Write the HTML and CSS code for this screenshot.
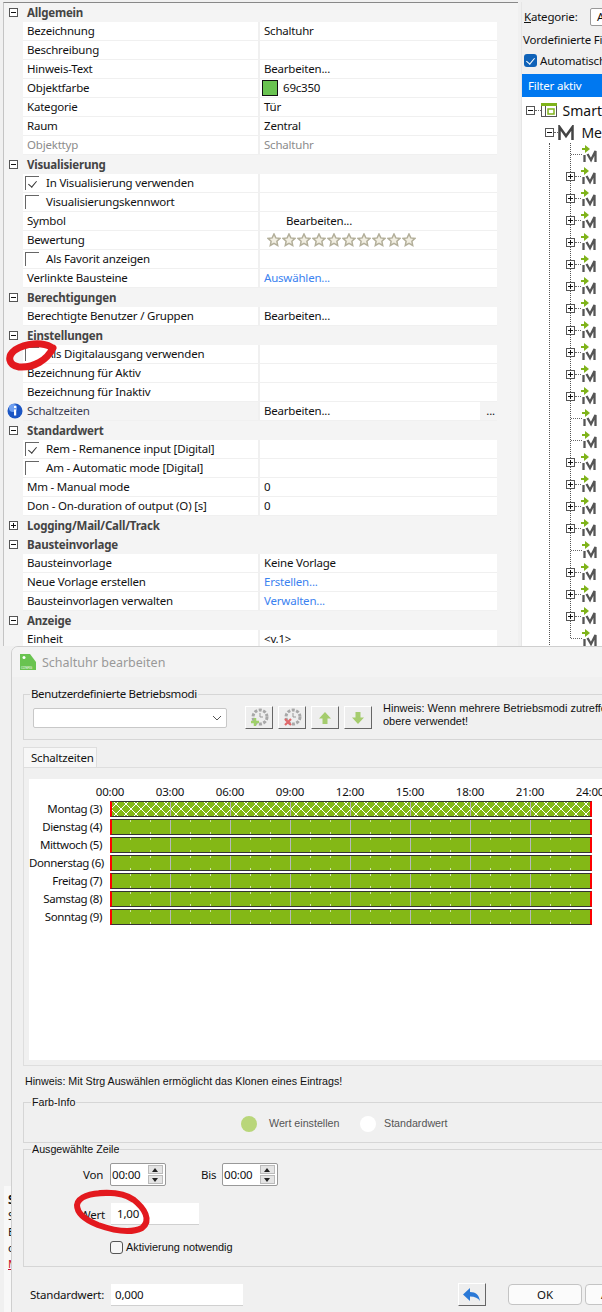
FILE: index.html
```html
<!DOCTYPE html>
<html lang="de">
<head>
    <meta charset="UTF-8">
    <title>Schaltuhr bearbeiten</title>
    <link rel="stylesheet" href="styles.css">
</head>
<body>
    <svg class="defs" width="0" height="0">
        <symbol id="star" viewBox="0 0 14 14">
            <path d="M7 1l1.800 3.900 4.200.5-3.100 2.900.8 4.200L7 10.400l-3.700 2.100.8-4.200L1 5.400l4.200-.5z" fill="#f1eee2" stroke="#b3af9a" stroke-width="1.500"/>
        </symbol>
        <symbol id="leaf" viewBox="0 0 16 18">
            <path d="M0 3h3V0l5 4-5 4V5H0z" fill="#7fb31a"/>
            <path d="M2.500 10v7M5.500 9l3.500 6 4.500-9v11" fill="none" stroke="#555" stroke-width="2.300"/>
        </symbol>
    </svg>

    <div class="desk">
        <div class="props">
            <div class="group"><i class="toggle"></i>Allgemein</div>
            <div class="row"><div class="name">Bezeichnung</div><div class="val">Schaltuhr</div></div>
            <div class="row"><div class="name">Beschreibung</div><div class="val"></div></div>
            <div class="row"><div class="name">Hinweis-Text</div><div class="val">Bearbeiten...</div></div>
            <div class="row"><div class="name">Objektfarbe</div><div class="val val-color"><i class="swatch"></i>69c350</div></div>
            <div class="row"><div class="name">Kategorie</div><div class="val">Tür</div></div>
            <div class="row"><div class="name">Raum</div><div class="val">Zentral</div></div>
            <div class="row muted"><div class="name">Objekttyp</div><div class="val">Schaltuhr</div></div>

            <div class="group"><i class="toggle"></i>Visualisierung</div>
            <div class="row"><div class="name name-chk"><i class="chk on"></i>In Visualisierung verwenden</div><div class="val"></div></div>
            <div class="row"><div class="name name-chk"><i class="chk"></i>Visualisierungskennwort</div><div class="val"></div></div>
            <div class="row"><div class="name">Symbol</div><div class="val val-symbol">Bearbeiten...</div></div>
            <div class="row"><div class="name">Bewertung</div><div class="val val-stars">
                <svg><use href="#star"/></svg><svg><use href="#star"/></svg><svg><use href="#star"/></svg><svg><use href="#star"/></svg><svg><use href="#star"/></svg><svg><use href="#star"/></svg><svg><use href="#star"/></svg><svg><use href="#star"/></svg><svg><use href="#star"/></svg><svg><use href="#star"/></svg>
            </div></div>
            <div class="row"><div class="name name-chk"><i class="chk"></i>Als Favorit anzeigen</div><div class="val"></div></div>
            <div class="row"><div class="name">Verlinkte Bausteine</div><div class="val link">Auswählen...</div></div>

            <div class="group"><i class="toggle"></i>Berechtigungen</div>
            <div class="row"><div class="name">Berechtigte Benutzer / Gruppen</div><div class="val">Bearbeiten...</div></div>

            <div class="group"><i class="toggle"></i>Einstellungen</div>
            <div class="row"><div class="name name-chk"><i class="chk"></i>Als Digitalausgang verwenden</div><div class="val"></div></div>
            <div class="row"><div class="name">Bezeichnung für Aktiv</div><div class="val"></div></div>
            <div class="row"><div class="name">Bezeichnung für Inaktiv</div><div class="val"></div></div>
            <div class="row row-info">
                <svg class="info" width="16" height="16" viewBox="0 0 16 16">
                    <circle cx="8" cy="8" r="7.500" fill="#1c56c4"/>
                    <circle cx="6" cy="5" r="4" fill="#6f9ff0"/>
                    <rect x="7" y="6.500" width="2.200" height="6" fill="#fff"/>
                    <rect x="7" y="3" width="2.200" height="2" fill="#fff"/>
                </svg>
                <div class="name">Schaltzeiten</div><div class="val val-more">Bearbeiten...<span class="more">...</span></div>
            </div>

            <div class="group"><i class="toggle"></i>Standardwert</div>
            <div class="row"><div class="name name-chk"><i class="chk on"></i>Rem - Remanence input [Digital]</div><div class="val"></div></div>
            <div class="row"><div class="name name-chk"><i class="chk"></i>Am - Automatic mode [Digital]</div><div class="val"></div></div>
            <div class="row"><div class="name">Mm - Manual mode</div><div class="val">0</div></div>
            <div class="row"><div class="name">Don - On-duration of output (O) [s]</div><div class="val">0</div></div>

            <div class="group"><i class="toggle plus"></i>Logging/Mail/Call/Track</div>

            <div class="group"><i class="toggle"></i>Bausteinvorlage</div>
            <div class="row"><div class="name">Bausteinvorlage</div><div class="val">Keine Vorlage</div></div>
            <div class="row"><div class="name">Neue Vorlage erstellen</div><div class="val link">Erstellen...</div></div>
            <div class="row"><div class="name">Bausteinvorlagen verwalten</div><div class="val link">Verwalten...</div></div>

            <div class="group"><i class="toggle"></i>Anzeige</div>
            <div class="row"><div class="name">Einheit</div><div class="val">&lt;v.1&gt;</div></div>
        </div>

        <div class="side">
            <div class="side-cat"><span class="cat-label"><u>K</u>ategorie:</span><span class="cat-select">A</span></div>
            <div class="side-line">Vordefinierte Filter</div>
            <div class="side-auto"><i class="blue-chk"></i>Automatisch</div>
            <div class="filter-bar">Filter aktiv</div>
            <div class="tree">
                <div class="tree-row tree-smart">
                    <i class="toggle"></i><span class="dots"></span>
                    <svg class="smart-icon" width="16" height="14" viewBox="0 0 16 14">
                        <rect x=".5" y=".5" width="15" height="13" fill="#fff" stroke="#555"/>
                        <rect x="0" y="0" width="16" height="3" fill="#7fb31a"/>
                        <path d="M4.500 3v11" stroke="#555"/>
                        <rect x="7" y="6" width="6" height="5" fill="none" stroke="#7fb31a" stroke-width="1.500"/>
                    </svg>
                    <span class="tree-label">Smart</span>
                </div>
                <div class="tree-row tree-me">
                    <i class="toggle"></i><span class="dots"></span>
                    <svg class="m-icon" width="16" height="15" viewBox="0 0 16 15"><path d="M1.500 15V2l6.500 9 6.500-9v13" fill="none" stroke="#444" stroke-width="2.500"/></svg>
                    <span class="tree-label">Me</span>
                </div>
                <div class="trunk">
                    <div class="leaves">
                        <div class="tree-row"><span class="dots dots-long"></span><svg class="leaf"><use href="#leaf"/></svg></div>
                        <div class="tree-row"><i class="toggle plus"></i><span class="dots"></span><svg class="leaf"><use href="#leaf"/></svg></div>
                        <div class="tree-row"><i class="toggle plus"></i><span class="dots"></span><svg class="leaf"><use href="#leaf"/></svg></div>
                        <div class="tree-row"><i class="toggle plus"></i><span class="dots"></span><svg class="leaf"><use href="#leaf"/></svg></div>
                        <div class="tree-row"><i class="toggle plus"></i><span class="dots"></span><svg class="leaf"><use href="#leaf"/></svg></div>
                        <div class="tree-row"><i class="toggle plus"></i><span class="dots"></span><svg class="leaf"><use href="#leaf"/></svg></div>
                        <div class="tree-row"><i class="toggle plus"></i><span class="dots"></span><svg class="leaf"><use href="#leaf"/></svg></div>
                        <div class="tree-row"><i class="toggle plus"></i><span class="dots"></span><svg class="leaf"><use href="#leaf"/></svg></div>
                        <div class="tree-row"><i class="toggle plus"></i><span class="dots"></span><svg class="leaf"><use href="#leaf"/></svg></div>
                        <div class="tree-row"><i class="toggle plus"></i><span class="dots"></span><svg class="leaf"><use href="#leaf"/></svg></div>
                        <div class="tree-row"><i class="toggle plus"></i><span class="dots"></span><svg class="leaf"><use href="#leaf"/></svg></div>
                        <div class="tree-row"><i class="toggle plus"></i><span class="dots"></span><svg class="leaf"><use href="#leaf"/></svg></div>
                        <div class="tree-row"><span class="dots dots-long"></span><svg class="leaf"><use href="#leaf"/></svg></div>
                        <div class="tree-row"><span class="dots dots-long"></span><svg class="leaf"><use href="#leaf"/></svg></div>
                        <div class="tree-row"><i class="toggle plus"></i><span class="dots"></span><svg class="leaf"><use href="#leaf"/></svg></div>
                        <div class="tree-row"><i class="toggle plus"></i><span class="dots"></span><svg class="leaf"><use href="#leaf"/></svg></div>
                        <div class="tree-row"><i class="toggle plus"></i><span class="dots"></span><svg class="leaf"><use href="#leaf"/></svg></div>
                        <div class="tree-row"><i class="toggle plus"></i><span class="dots"></span><svg class="leaf"><use href="#leaf"/></svg></div>
                        <div class="tree-row"><span class="dots dots-long"></span><svg class="leaf"><use href="#leaf"/></svg></div>
                        <div class="tree-row"><i class="toggle plus"></i><span class="dots"></span><svg class="leaf"><use href="#leaf"/></svg></div>
                        <div class="tree-row"><i class="toggle plus"></i><span class="dots"></span><svg class="leaf"><use href="#leaf"/></svg></div>
                        <div class="tree-row"><i class="toggle plus"></i><span class="dots"></span><svg class="leaf"><use href="#leaf"/></svg></div>
                        <div class="tree-row"><span class="dots dots-long"></span><svg class="leaf"><use href="#leaf"/></svg></div>
                    </div>
                </div>
            </div>
        </div>
    </div>

    <div class="behind">
        <div class="behind-b">S</div>
        <div>S</div>
        <div>E</div>
        <div>c</div>
        <div class="behind-red">M</div>
    </div>

    <!-- dialog window sits over the property grid -->
    <div class="dialog">
        <div class="titlebar">
            <svg class="app-icon" width="16" height="16" viewBox="0 0 16 16">
                <path d="M0 0h10l6 8v8H0z" fill="#69c350"/>
                <circle cx="4" cy="3.500" r="1.500" fill="#fff"/>
                <text x="1" y="14.500" class="app-icon-text">CONFIG</text>
            </svg>
            <span>Schaltuhr bearbeiten</span>
        </div>
        <div class="dialog-body">
            <fieldset class="box box-modes">
                <legend>Benutzerdefinierte Betriebsmodi</legend>
                <div class="modes">
                    <div class="combo">
                        <svg width="10" height="6" viewBox="0 0 10 6"><path d="M1 1l4 4 4-4" fill="none" stroke="#555"/></svg>
                    </div>
                    <div class="tool-btns">
                        <button class="tool">
                            <svg width="20" height="20" viewBox="0 0 20 20">
                                <circle cx="11" cy="9" r="7" fill="none" stroke="#a8a8a8" stroke-width="3" stroke-dasharray="3 1.500"/>
                                <path d="M11 5v4h3" fill="none" stroke="#999"/>
                                <path d="M6 10v8M2 14h8" stroke="#9fd06a" stroke-width="2.500"/>
                            </svg>
                        </button>
                        <button class="tool">
                            <svg width="20" height="20" viewBox="0 0 20 20">
                                <circle cx="11" cy="9" r="7" fill="none" stroke="#a8a8a8" stroke-width="3" stroke-dasharray="3 1.500"/>
                                <path d="M11 5v4h3" fill="none" stroke="#999"/>
                                <path d="M3 11l6 6M9 11l-6 6" stroke="#e0686a" stroke-width="2.200"/>
                            </svg>
                        </button>
                        <button class="tool">
                            <svg width="14" height="14" viewBox="0 0 14 14"><path d="M7 1l6 6.500H9.500V13h-5V7.500H1z" fill="#a5cc6e"/></svg>
                        </button>
                        <button class="tool">
                            <svg width="14" height="14" viewBox="0 0 14 14"><path d="M7 13L1 6.500h3.500V1h5v5.500H13z" fill="#a5cc6e"/></svg>
                        </button>
                    </div>
                    <p class="modes-hint">Hinweis: Wenn mehrere Betriebsmodi zutreffen, wird der<br>obere verwendet!</p>
                </div>
            </fieldset>

            <div class="tabs"><div class="tab">Schaltzeiten</div></div>
            <div class="tab-pane">
                <div class="schedule">
                    <div class="hours">
                        <span>00:00</span><span>03:00</span><span>06:00</span><span>09:00</span><span>12:00</span><span>15:00</span><span>18:00</span><span>21:00</span><span>24:00</span>
                    </div>
                    <div class="day"><span class="day-name">Montag (3)</span><div class="bar bar-hatch"></div></div>
                    <div class="day"><span class="day-name">Dienstag (4)</span><div class="bar"></div></div>
                    <div class="day"><span class="day-name">Mittwoch (5)</span><div class="bar"></div></div>
                    <div class="day"><span class="day-name">Donnerstag (6)</span><div class="bar"></div></div>
                    <div class="day"><span class="day-name">Freitag (7)</span><div class="bar"></div></div>
                    <div class="day"><span class="day-name">Samstag (8)</span><div class="bar"></div></div>
                    <div class="day"><span class="day-name">Sonntag (9)</span><div class="bar"></div></div>
                </div>
            </div>

            <p class="clone-hint">Hinweis: Mit Strg Auswählen ermöglicht das Klonen eines Eintrags!</p>

            <fieldset class="box box-colors">
                <legend class="legend-sm">Farb-Info</legend>
                <div class="colors">
                    <i class="dot dot-green"></i><span class="dot-label dot-label-first">Wert einstellen</span>
                    <i class="dot dot-white"></i><span class="dot-label">Standardwert</span>
                </div>
            </fieldset>

            <fieldset class="box box-line">
                <legend class="legend-sm">Ausgewählte Zeile</legend>
                <div class="line-times">
                    <span class="lbl lbl-von">Von</span>
                    <div class="spin"><span>00:00</span><div class="spin-btns"><i class="up"></i><i class="down"></i></div></div>
                    <span class="lbl lbl-bis">Bis</span>
                    <div class="spin"><span>00:00</span><div class="spin-btns"><i class="up"></i><i class="down"></i></div></div>
                </div>
                <div class="line-value">
                    <span class="lbl">Wert</span>
                    <div class="input input-wert">1,00</div>
                </div>
                <label class="line-check"><i class="round-chk"></i>Aktivierung notwendig</label>
            </fieldset>

            <div class="footer">
                <span class="footer-lbl">Standardwert:</span>
                <div class="input input-std">0,000</div>
                <button class="tool tool-back">
                    <svg width="18" height="14" viewBox="0 0 18 14"><path d="M0 6.500L7 0v4c6 0 9 3 10 9-2-3-5-4.500-10-4.500V13z" fill="#2a78d6"/></svg>
                </button>
                <button class="push push-ok">OK</button>
                <button class="push push-cancel">Abbrechen</button>
            </div>
        </div>
    </div>

    <!-- hand drawn red marks on the screenshot -->
    <svg class="mark mark-check" width="60" height="40" viewBox="0 0 60 40">
        <path d="M47 7C38 2 22 3 11 10 3 16 4 25 15 27 30 28 43 20 49 8" fill="none" stroke="#e3191e" stroke-width="7" stroke-linecap="round"/>
    </svg>
    <svg class="mark mark-wert" width="90" height="55" viewBox="0 0 90 55">
        <path d="M28 5C42 4 54 6 62 12 72 20 80 32 70 40 58 46 40 42 26 37 16 33 5 26 5 17 6 9 18 5 34 5" fill="none" stroke="#e3191e" stroke-width="6" stroke-linecap="round"/>
    </svg>
</body>
</html>
```
FILE: styles.css
```css
* {
    box-sizing: border-box;
}

html, body {
    margin: 0;
    height: 1312px;
    overflow: hidden;
}

body {
    position: relative;
    width: 602px;
    background: #f0f0f0;
    color: #111;
    font-family: "Noto Sans", "Open Sans", sans-serif;
    font-size: 11.500px;
    letter-spacing: -0.2px;
    line-height: 19px;
}

.defs {
    position: absolute;
}

i {
    display: block;
    flex: none;
}

/* Property grid */
.desk {
    display: flex;
    height: 646px;
    padding-top: 2px;
}

.props {
    width: 515px;
    flex: none;
    margin-left: 3px;
    padding-right: 21px;
    border-top: 1px solid #888;
    border-left: 1px solid #c4c4c4;
    background: #f4f4f4;
}

.group {
    display: flex;
    align-items: center;
    height: 19px;
    padding-left: 5px;
    font-weight: 700;
    color: #444;
}

.toggle {
    position: relative;
    width: 9px;
    height: 9px;
    margin-right: 9px;
    border: 1px solid #555;
    background: #fff;
}

.toggle::before {
    content: "";
    position: absolute;
    left: 1px;
    top: 3px;
    width: 5px;
    height: 1px;
    background: #111;
}

.toggle.plus::after {
    content: "";
    position: absolute;
    left: 3px;
    top: 1px;
    width: 1px;
    height: 5px;
    background: #111;
}

.row {
    position: relative;
    display: flex;
    height: 19px;
    margin-left: 19px;
    background: #fff;
    border-bottom: 1px solid #f0f0f0;
}

.name {
    display: flex;
    align-items: center;
    width: 237px;
    flex: none;
    padding: 0 0 1px 4px;
    border-right: 2px solid #f0f0f0;
}

.name-chk {
    padding-left: 2px;
}

.val {
    display: flex;
    align-items: center;
    flex: 1;
    padding: 0 0 1px 4px;
}

.muted {
    color: #8c8c8c;
}

.link {
    color: #3b82f0;
}

.val-color {
    padding-left: 2px;
}

.swatch {
    width: 16px;
    height: 16px;
    margin-right: 5px;
    background: #69c350;
    border: 1px solid #111;
}

.val-symbol {
    padding-left: 26px;
}

.val-stars {
    gap: 1px;
    padding-left: 7px;
}

.val-stars svg {
    width: 14px;
    height: 14px;
}

.chk {
    position: relative;
    width: 14px;
    height: 14px;
    margin-right: 7px;
    border-top: 1px solid #666;
    border-left: 1px solid #666;
}

.chk.on::after {
    content: "";
    position: absolute;
    left: 4px;
    top: 2px;
    width: 4px;
    height: 7px;
    border-right: 1px solid #333;
    border-bottom: 1px solid #333;
    transform: rotate(40deg);
}

.row-info {
    background: #f4f4f4;
}

.row-info .name {
    color: #3c3c50;
}

.row-info .val {
    background: #fff;
}

.val-more {
    justify-content: space-between;
}

.more {
    padding: 0 2px 0 6px;
    background: #f4f4f4;
    line-height: 18px;
}

.info {
    position: absolute;
    left: -16px;
    top: 1px;
}

/* Object tree on the right */
.side {
    flex: 1;
    margin-left: 3px;
    min-width: 0;
    border-left: 1px solid #e6e6e6;
    overflow: hidden;
    white-space: nowrap;
}

.side-cat {
    display: flex;
    align-items: center;
    height: 27px;
    padding: 2px 0 0 2px;
}

.cat-label {
    width: 66px;
    flex: none;
}

.cat-select {
    width: 40px;
    height: 18px;
    padding-left: 6px;
    border: 1px solid #999;
    border-radius: 2px;
    background: #fff;
    line-height: 16px;
}

.side-line {
    height: 24px;
    padding-left: 1px;
    line-height: 22px;
}

.side-auto {
    display: flex;
    align-items: center;
    height: 21px;
    padding: 0 0 6px 2px;
}

.blue-chk {
    position: relative;
    width: 13px;
    height: 13px;
    margin-right: 3px;
    border-radius: 3px;
    background: #0f62b8;
}

.blue-chk::after {
    content: "";
    position: absolute;
    left: 4px;
    top: 2px;
    width: 4px;
    height: 7px;
    border-right: 1px solid #fff;
    border-bottom: 1px solid #fff;
    transform: rotate(40deg);
}

.filter-bar {
    height: 23px;
    padding-left: 6px;
    background: #0078f0;
    color: #fff;
    line-height: 23px;
}

.tree {
    height: 560px;
    padding-top: 2px;
    background: #fff;
}

.tree-row {
    display: flex;
    align-items: center;
    height: 22px;
}

.tree .toggle {
    margin-right: 0;
    background: #fff;
}

.tree-label {
    font-size: 14px;
    letter-spacing: 0;
}

.tree-smart {
    padding-left: 4px;
}

.tree-me {
    padding-left: 23px;
}

.dots {
    width: 6px;
    border-top: 1px dotted #666;
}

.dots-long {
    width: 11px;
}

.tree-smart .dots,
.tree-me .dots {
    width: 7px;
}

.smart-icon {
    flex: none;
    margin-right: 6px;
}

.m-icon {
    flex: none;
    margin-right: 7px;
}

.trunk {
    height: 520px;
    margin-left: 27px;
    padding-left: 20px;
    border-left: 1px dotted #555;
}

.leaves {
    height: 495px;
    border-left: 1px dotted #555;
}

.leaves .toggle {
    margin-left: -5px;
    z-index: 1;
}

.leaf {
    width: 16px;
    height: 18px;
    flex: none;
}

/* Panel peeking out left of the dialog */
.behind {
    position: absolute;
    left: 4px;
    top: 1186px;
    width: 8px;
    height: 126px;
    padding: 6px 0 0 4px;
    background: #f8f8f8;
    line-height: 16px;
    overflow: hidden;
}

.behind-b {
    font-weight: 700;
}

.behind-red {
    color: #c8102e;
    text-decoration: underline;
}

/* Dialog */
.dialog {
    position: absolute;
    left: 11px;
    top: 646px;
    width: 640px;
    height: 680px;
    border: 1px solid #cfcfcf;
    border-top-left-radius: 7px;
    background: #f0f0f0;
    overflow: hidden;
}

.titlebar {
    display: flex;
    align-items: center;
    height: 30px;
    padding-left: 8px;
    background: #f3f3f3;
    color: #999;
    font-size: 12.500px;
    letter-spacing: 0;
}

.app-icon {
    margin-right: 6px;
}

.app-icon-text {
    font-size: 3px;
    fill: #fff;
}

.dialog-body {
    padding: 0 0 0 11px;
}

.box {
    margin: 0;
    padding: 0;
    border: 1px solid #d6d6d6;
    border-right: 0;
    min-width: 0;
}

.box legend {
    margin-left: 6px;
    padding: 0 1px;
    line-height: 16px;
    letter-spacing: -0.35px;
}

.box .legend-sm {
    margin-left: 7px;
    font-family: "Liberation Sans", sans-serif;
    font-size: 10.700px;
    letter-spacing: 0;
}

.box-modes {
    height: 54px;
    margin-top: 9px;
}

.modes {
    display: flex;
    align-items: flex-start;
    padding: 6px 0 0 9px;
}

.combo {
    display: flex;
    align-items: center;
    justify-content: flex-end;
    width: 194px;
    height: 20px;
    flex: none;
    padding-right: 4px;
    border: 1px solid #c8c8c8;
    border-radius: 2px;
    background: #fff;
}

.tool-btns {
    display: flex;
    flex: none;
    gap: 5px;
    margin: -2px 11px 0 18px;
}

.tool {
    display: flex;
    align-items: center;
    justify-content: center;
    width: 28px;
    height: 23px;
    flex: none;
    padding: 0;
    border: 1px solid;
    border-color: #fff #666 #666 #fff;
    background: #eee;
}

.modes-hint {
    flex: none;
    margin: -6px 0 0;
    font-family: "Liberation Sans", sans-serif;
    font-size: 11px;
    letter-spacing: 0;
    line-height: 13px;
    white-space: nowrap;
}

.tabs {
    display: flex;
    height: 27px;
    padding-top: 7px;
}

.tab {
    width: 74px;
    height: 20px;
    padding-left: 7px;
    border: 1px solid #dedede;
    border-bottom: 0;
    background: #f7f7f7;
    line-height: 20px;
}

.tab-pane {
    height: 299px;
    padding: 11px 0 0 5px;
    border: 1px solid #dedede;
    border-right: 0;
}

.schedule {
    height: 281px;
    background: #fff;
}

.hours {
    display: flex;
    height: 22px;
    padding: 4px 0 0 51px;
    line-height: 18px;
}

.hours span {
    width: 60px;
    flex: none;
    text-align: center;
}

.day {
    display: flex;
    align-items: center;
    height: 16px;
    margin-bottom: 2px;
}

.day-name {
    width: 73px;
    flex: none;
    padding-bottom: 2px;
    letter-spacing: -0.4px;
    text-align: right;
    white-space: nowrap;
}

.bar {
    width: 482px;
    height: 16px;
    flex: none;
    margin-left: 8px;
    border: 1px solid #333;
    border-left: 2px solid #f00;
    border-right: 2px solid #f00;
    background-color: #84b816;
    background-image:
        repeating-linear-gradient(90deg, #b8b8b8 0 1px, transparent 1px 60px),
        repeating-linear-gradient(90deg, #d4e4a8 0 1px, transparent 1px 20px),
        repeating-linear-gradient(90deg, #d4e4a8 0 1px, transparent 1px 20px);
    background-size: 100% 100%, 100% 3px, 100% 3px;
    background-position: 0 0, 0 0, 0 100%;
    background-repeat: no-repeat;
    background-origin: border-box;
}

.bar-hatch {
    background-image:
        repeating-linear-gradient(90deg, #b8b8b8 0 1px, transparent 1px 60px),
        repeating-linear-gradient(45deg, transparent 0 5.800px, #fff 5.800px 7.070px),
        repeating-linear-gradient(-45deg, transparent 0 5.800px, #fff 5.800px 7.070px);
    background-size: 100% 100%;
    background-position: 0 0;
}

.clone-hint {
    height: 28px;
    margin: 0;
    padding: 6px 0 0 2px;
    font-family: "Liberation Sans", sans-serif;
    font-size: 10.700px;
    letter-spacing: 0;
    line-height: 19px;
}

.box-colors {
    height: 49px;
}

.colors {
    display: flex;
    align-items: center;
    padding: 4px 0 0 217px;
}

.dot {
    width: 16px;
    height: 16px;
    border-radius: 50%;
}

.dot-green {
    background: #b9d67a;
}

.dot-white {
    background: #fff;
}

.dot-label {
    margin-left: 8px;
    color: #555;
    font-family: "Liberation Sans", sans-serif;
    font-size: 10.700px;
    letter-spacing: 0;
}

.dot-label-first {
    width: 91px;
    flex: none;
    margin-left: 12px;
}

.box-line {
    height: 126px;
    margin-top: -2px;
}

.line-times {
    display: flex;
    align-items: center;
    padding-top: 6px;
}

.lbl-von {
    width: 86px;
    flex: none;
    padding-left: 59px;
}

.lbl-bis {
    width: 56px;
    flex: none;
    padding-left: 35px;
}

.spin {
    display: flex;
    align-items: center;
    justify-content: space-between;
    width: 56px;
    height: 23px;
    flex: none;
    padding: 0 2px 0 1px;
    border: 1px solid #999;
    border-radius: 2px;
    background: #fff;
}

.spin-btns {
    display: flex;
    flex-direction: column;
    width: 15px;
    height: 19px;
    gap: 1px;
}

.spin-btns i {
    position: relative;
    flex: 1;
    background: #e4e4e4;
    border: 1px solid #bbb;
}

.spin-btns i::after {
    content: "";
    position: absolute;
    left: 3px;
    top: 2px;
    border-left: 3px solid transparent;
    border-right: 3px solid transparent;
}

.spin-btns .up::after {
    border-bottom: 4px solid #222;
}

.spin-btns .down::after {
    border-top: 4px solid #222;
}

.line-value {
    display: flex;
    align-items: center;
    margin-top: 17px;
    padding-left: 56px;
}

.line-value .lbl {
    width: 31px;
    flex: none;
}

.input {
    height: 22px;
    flex: none;
    padding-left: 5px;
    background: #fff;
    border-bottom: 1px solid #d0d0d0;
    line-height: 21px;
}

.input-wert {
    width: 88px;
    padding-left: 6px;
}

.line-check {
    display: flex;
    align-items: center;
    margin: 13px 0 0 86px;
    font-family: "Liberation Sans", sans-serif;
    font-size: 10.900px;
    letter-spacing: 0;
}

.round-chk {
    width: 13px;
    height: 13px;
    margin-right: 3px;
    border: 1px solid #555;
    border-radius: 3px;
    background: #f6f6f6;
}

.footer {
    display: flex;
    align-items: center;
    margin-top: 16px;
    padding-left: 7px;
}

.footer-lbl {
    width: 81px;
    flex: none;
}

.input-std {
    width: 132px;
    padding-left: 4px;
}

.tool-back {
    margin-left: 215px;
}

.push {
    width: 74px;
    height: 21px;
    flex: none;
    margin-left: 3px;
    padding: 0;
    border: 1px solid #c4c4c4;
    border-radius: 4px;
    background: #fbfbfb;
    color: #111;
    font: inherit;
    line-height: 19px;
}

.push-ok {
    margin-left: 22px;
}

.push-cancel {
    padding-left: 15px;
    text-align: left;
}

/* Red marks */
.mark {
    position: absolute;
}

.mark-check {
    left: 4px;
    top: 340px;
}

.mark-wert {
    left: 72px;
    top: 1188px;
}
```
